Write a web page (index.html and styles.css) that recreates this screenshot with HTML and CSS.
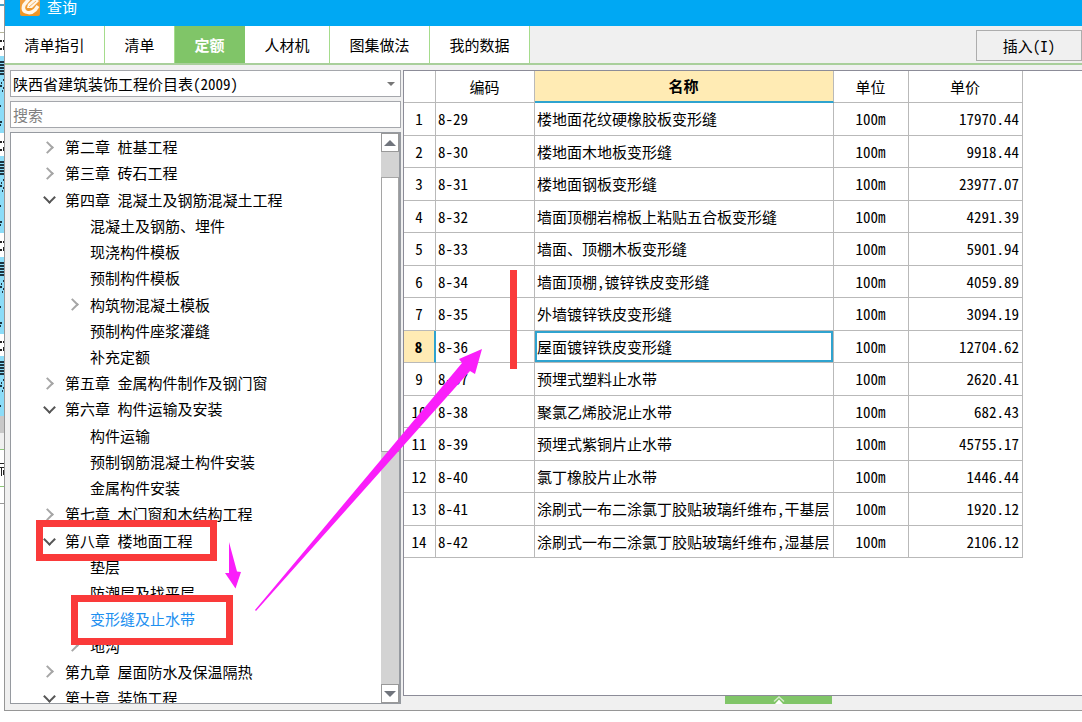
FILE: index.html
```html
<!DOCTYPE html>
<html lang="zh-CN">
<head>
<meta charset="utf-8">
<title>查询</title>
<link rel="stylesheet" href="styles.css">
</head>
<body>
<div class="desktop">
  <svg class="backdrop" width="5" height="722" viewBox="0 0 5 722" aria-hidden="true">
    <defs>
      <g id="mark"><path d="M0 1h2M0 9h2M3 1h2M4 3h1M3 7h1M3 9h2" stroke="#222" stroke-width="2"/></g>
      <g id="row"><rect width="5" height="77" fill="#8bdcf8"/><path d="M0 6h4M0 9h4M0 12h4M0 15h4M0 18h4M3 24h1M1 27h1M0 30h2M3 32h1M2 35h1M0 50h1M0 66h2M0 69h1" stroke="#1d3440" stroke-width="2"/></g>
    </defs>
    <path d="M0 5h5" stroke="#4d9fc4" stroke-width="2"/>
    <path d="M0 32.500h5" stroke="#b5b59a"/>
    <use href="#row" y="56"/><use href="#row" y="156"/><use href="#row" y="257"/><use href="#row" y="356"/>
    <use href="#mark" y="40"/><use href="#mark" y="141"/><use href="#mark" y="241"/><use href="#mark" y="341"/>
    <path d="M0 416h5v22H0z" fill="#c8c8c8"/><path d="M0 433h5v289H0z" fill="#fff"/><path d="M0 433h5v16H0z" fill="#f0f0f0"/>
    <path d="M0 449.500h5M0 486.500h5" stroke="#8cc878"/><path d="M0 503.500h5" stroke="#999"/>
    <path d="M0 463.500h5M0 467.500h5M1.500 468v8M3.500 470v5" stroke="#222"/>
  </svg>
  <main class="dialog">
    <header class="titlebar">
      <svg class="logo" viewBox="0 0 20 20"><defs><linearGradient id="g" x1="0" y1="0" x2="0" y2="1"><stop offset="0" stop-color="#f2a24a"/><stop offset="1" stop-color="#ee9420"/></linearGradient></defs><rect width="20" height="20" rx="2" fill="url(#g)"/><path d="M9 3L4 9q-2 5 2 7q5 2 9-2l3-4" fill="none" stroke="#fff6e8" stroke-width="3.500"/><path d="M7 12l1-4 7-6 4 3-7 7z" fill="#fff6e8"/><path d="M9 11l7-6" stroke="#f3b468" stroke-width="1"/></svg>
      <span>查询</span>
    </header>
    <nav class="toolbar">
      <button class="tab w-4">清单指引</button><button class="tab w-2">清单</button><button class="tab w-2 active">定额</button><button class="tab w-3">人材机</button><button class="tab w-4">图集做法</button><button class="tab w-4">我的数据</button>
      <button class="insert">插入(I)</button>
    </nav>
    <div class="content">
      <aside class="sidebar">
        <div class="combo"><select class="field" aria-label="价目表"><option>陕西省建筑装饰工程价目表(2009)</option></select><svg class="caret" viewBox="0 0 8 4"><path d="M0 0h8L4 4z"/></svg></div>
        <input class="field" type="text" placeholder="搜索" aria-label="搜索">
        <div class="treebox">
          <ul class="tree">
            <li class="closed">第二章 桩基工程</li>
            <li class="closed">第三章 砖石工程</li>
            <li class="open">第四章 混凝土及钢筋混凝土工程</li>
            <li class="sub">混凝土及钢筋、埋件</li>
            <li class="sub">现浇构件模板</li>
            <li class="sub">预制构件模板</li>
            <li class="sub closed">构筑物混凝土模板</li>
            <li class="sub">预制构件座浆灌缝</li>
            <li class="sub">补充定额</li>
            <li class="closed">第五章 金属构件制作及钢门窗</li>
            <li class="open">第六章 构件运输及安装</li>
            <li class="sub">构件运输</li>
            <li class="sub">预制钢筋混凝土构件安装</li>
            <li class="sub">金属构件安装</li>
            <li class="closed">第七章 木门窗和木结构工程</li>
            <li class="open">第八章 楼地面工程</li>
            <li class="sub">垫层</li>
            <li class="sub">防潮层及找平层</li>
            <li class="sub current">变形缝及止水带</li>
            <li class="sub closed">地沟</li>
            <li class="closed">第九章 屋面防水及保温隔热</li>
            <li class="open">第十章 装饰工程</li>
          </ul>
          <div class="scrollbar">
            <button class="arrow" aria-label="向上"><svg viewBox="0 0 12 6"><path d="M6 0l6 6H0z"/></svg></button>
            <div class="track"><div class="thumb"></div></div>
            <button class="arrow" aria-label="向下"><svg viewBox="0 0 12 6"><path d="M0 0h12L6 6z"/></svg></button>
          </div>
        </div>
      </aside>
      <section class="grid">
        <table>
          <colgroup><col class="c-no"><col class="c-code"><col class="c-name"><col class="c-unit"><col class="c-price"></colgroup>
          <thead><tr><th></th><th>编码</th><th class="sorted">名称</th><th>单位</th><th>单价</th></tr></thead>
          <tbody>
            <tr><th>1</th><td>8-29</td><td>楼地面花纹硬橡胶板变形缝</td><td>100m</td><td>17970.44</td></tr>
            <tr><th>2</th><td>8-30</td><td>楼地面木地板变形缝</td><td>100m</td><td>9918.44</td></tr>
            <tr><th>3</th><td>8-31</td><td>楼地面钢板变形缝</td><td>100m</td><td>23977.07</td></tr>
            <tr><th>4</th><td>8-32</td><td>墙面顶棚岩棉板上粘贴五合板变形缝</td><td>100m</td><td>4291.39</td></tr>
            <tr><th>5</th><td>8-33</td><td>墙面、顶棚木板变形缝</td><td>100m</td><td>5901.94</td></tr>
            <tr><th>6</th><td>8-34</td><td>墙面顶棚,镀锌铁皮变形缝</td><td>100m</td><td>4059.89</td></tr>
            <tr><th>7</th><td>8-35</td><td>外墙镀锌铁皮变形缝</td><td>100m</td><td>3094.19</td></tr>
            <tr class="selected"><th>8</th><td>8-36</td><td>屋面镀锌铁皮变形缝</td><td>100m</td><td>12704.62</td></tr>
            <tr><th>9</th><td>8-37</td><td>预埋式塑料止水带</td><td>100m</td><td>2620.41</td></tr>
            <tr><th>10</th><td>8-38</td><td>聚氯乙烯胶泥止水带</td><td>100m</td><td>682.43</td></tr>
            <tr><th>11</th><td>8-39</td><td>预埋式紫铜片止水带</td><td>100m</td><td>45755.17</td></tr>
            <tr><th>12</th><td>8-40</td><td>氯丁橡胶片止水带</td><td>100m</td><td>1446.44</td></tr>
            <tr><th>13</th><td>8-41</td><td>涂刷式一布二涂氯丁胶贴玻璃纤维布,干基层</td><td>100m</td><td>1920.12</td></tr>
            <tr><th>14</th><td>8-42</td><td>涂刷式一布二涂氯丁胶贴玻璃纤维布,湿基层</td><td>100m</td><td>2106.12</td></tr>
          </tbody>
        </table>
      </section>
    </div>
    <footer class="bottom"><button class="expander" aria-label="展开"><svg viewBox="0 0 12 8"><path d="M1 5.500L6 1l5 4.500" fill="none" stroke="#d5ecca" stroke-width="1.500"/><path d="M6 3.500L10 8H2z" fill="#fff"/></svg></button></footer>
  </main>
  <svg class="notes" width="1082" height="722" viewBox="0 0 1082 722" aria-hidden="true">
    <g fill="none" stroke="#fa3a3a" stroke-width="7"><rect x="39.500" y="523.500" width="174" height="34"/><rect x="74.500" y="598.500" width="155" height="43"/><path d="M513.500 270v99"/></g>
    <g fill="#fa1efa"><path d="M229 542L237 571.500l4 .5-5.500 16.500L225 573h4z"/><path d="M255 610L462 363l-3-4 23-10-7 25-5-3L256 611z"/></g>
  </svg>
</div>
</body>
</html>
```
FILE: styles.css
```css
* { box-sizing: border-box; }
body {
  margin: 0;
  background: #fff;
  color: #000;
  font: 15px/20px "Noto Sans CJK SC", sans-serif;
  font-feature-settings: "hwid";
}
button, input, select { font: inherit; font-feature-settings: inherit; color: inherit; margin: 0; border-radius: 0; }
.desktop { position: relative; display: flex; min-height: 100vh; overflow: hidden; padding-left: 4px; }
.backdrop { position: absolute; left: 0; top: 0; }
.dialog { position: relative; flex: 1; min-width: 0; display: flex; flex-direction: column; margin-bottom: 11px; background: #f0f0f0; border-left: 1px solid #969696; border-bottom: 1px solid #969696; }
.titlebar { height: 26px; display: flex; align-items: flex-start; gap: 7px; padding-left: 15px; background: #00a8f3; color: #fff; overflow: hidden; line-height: 14px; }
.logo { width: 20px; height: 20px; margin-top: -4px; flex: none; }
.toolbar { display: flex; height: 39px; border-bottom: 2px solid #a9cf9b; flex: none; }
.tab { padding: 0; border: 0; border-right: 1px solid #a5dc8c; background: #fff; }
.w-4 { width: 100px; }
.w-2 { width: 70px; }
.w-3 { width: 85px; }
.tab.active { background: #80c568; color: #fff; font-weight: 700; border-color: #80c568; }
.insert { width: 106px; height: 31px; margin: 4px 0 0 auto; border: 1px solid #adadad; background: #f0f0f0; padding: 0; }
.content { flex: 1; min-height: 0; display: flex; gap: 2px; padding: 5px 0 0 5px; }
.sidebar { width: 391px; flex: none; display: flex; flex-direction: column; gap: 4px; margin-bottom: -8px; }
.field { width: 100%; height: 27px; border: 1px solid #a5a7ac; background: #fff; padding: 0 2px; appearance: none; display: block; outline: 0; flex: none; }
.field::placeholder { color: #808080; opacity: 1; }
.combo { position: relative; }
.caret { position: absolute; right: 6px; top: 12px; width: 8px; height: 4px; fill: #777; }
.treebox { flex: 1; min-height: 0; display: flex; overflow: hidden; border: 1px solid #969aa0; border-right-width: 2px; background: #fff; }
.tree { flex: 1; display: flex; flex-direction: column; list-style: none; margin: 1px 0 -8px; padding: 0; }
.tree li { flex: 1; display: flex; align-items: center; padding-left: 54px; position: relative; white-space: pre; }
.tree .sub { padding-left: 79px; }
.tree .current { color: #1e90f0; }
.closed::before, .open::before { content: ""; position: absolute; left: 32px; width: 7px; height: 7px; border: solid #a6a6a6; border-width: 2px 2px 0 0; transform: rotate(45deg); }
.open::before { left: 34px; top: 7px; border-color: #555; transform: rotate(135deg); }
.sub.closed::before { left: 57px; }
.scrollbar { width: 18px; display: flex; flex-direction: column; background: #d3d3d3; }
.arrow { height: 19px; padding: 0; border: 1px solid #999; background: #fff; display: grid; place-items: center; flex: none; }
.arrow svg { width: 12px; height: 6px; fill: #70747c; display: block; }
.track { flex: 1; padding-top: 25px; }
.thumb { height: 275px; background: #fff; border: 1px solid #a5a5a5; }
.grid { flex: 1; min-width: 0; border: 1px solid #8c8c98; border-right: 0; background: #fff; }
table { width: 619px; table-layout: fixed; border-collapse: separate; border-spacing: 0; }
.c-no { width: 32px; }
.c-code { width: 99px; }
.c-name { width: 299px; }
.c-unit { width: 75px; }
.c-price { width: 114px; }
th, td { height: 32px; padding: 0 3px 0 2px; border: solid #b9b9b9; border-width: 0 1px 1px 0; font-weight: 400; text-align: left; white-space: nowrap; line-height: 20px; }
tbody tr:nth-child(odd) > * { height: 33px; }
th, td:nth-child(4) { text-align: center; }
td:nth-child(5) { text-align: right; }
.sorted { background: #ffebb4; font-weight: 700; border-bottom: 2px solid #2fa3cf; }
.selected th { background: #ffebb4; font-weight: 700; border-right: 2px solid #2fa3cf; }
.selected td:nth-child(3) { box-shadow: inset 0 0 0 2px #2fa3cf; }
.bottom { height: 14px; display: flex; flex: none; }
.expander { width: 107px; height: 8px; margin-left: 720px; padding: 0; border: 0; background: #80c568; display: flex; justify-content: center; }
.expander svg { width: 12px; height: 8px; }
.notes { position: absolute; left: 0; top: 0; pointer-events: none; }
```
